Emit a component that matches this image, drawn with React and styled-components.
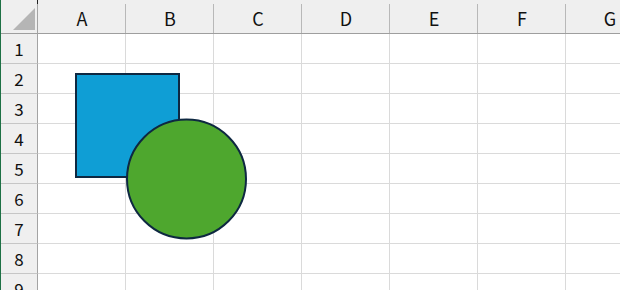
import styled, { createGlobalStyle } from "styled-components";

const GlobalStyle = createGlobalStyle`
  html, body {
    margin: 0;
    padding: 0;
    background: #ffffff;
    overflow: hidden;
  }
  body {
    font-family: "Noto Sans CJK JP", "Liberation Sans", sans-serif;
  }
`;

const COLS = ["A", "B", "C", "D", "E", "F", "G"];
const ROWS = [1, 2, 3, 4, 5, 6, 7, 8, 9];

const Sheet = styled.div`
  position: relative;
  width: 620px;
  height: 290px;
  overflow: hidden;
  border-left: 1px solid #1e7145;
  box-sizing: border-box;
`;

const Grid = styled.div`
  display: grid;
  grid-template-columns: 37px repeat(${COLS.length}, 88px);
  grid-template-rows: 34px repeat(${ROWS.length}, 30px);
`;

const Corner = styled.div`
  position: relative;
  background: #efefef;
  border-right: 1px solid #a3a3a3;
  border-bottom: 1px solid #9e9e9e;
  box-sizing: border-box;
  display: flex;
  align-items: flex-end;
  justify-content: flex-end;
  padding: 0 2px 3px 0;

  &::before {
    content: "";
    position: absolute;
    right: -1px;
    top: 0;
    width: 1px;
    height: 4px;
    background: #202020;
  }
`;

const ColHead = styled.div`
  position: relative;
  background: #efefef;
  border-bottom: 1px solid #9e9e9e;
  box-sizing: border-box;
  display: flex;
  align-items: center;
  justify-content: center;
  padding-top: 2px;
  font-size: 18px;
  color: #111111;

  &::after {
    content: "";
    position: absolute;
    right: 0;
    top: 4px;
    bottom: 0;
    width: 1px;
    background: #b8b8b8;
  }
`;

const RowHead = styled.div`
  background: #efefef;
  border-right: 1px solid #a3a3a3;
  border-bottom: 1px solid #c6c6c6;
  box-sizing: border-box;
  display: flex;
  align-items: center;
  justify-content: center;
  font-size: 17px;
  color: #111111;
`;

const Cell = styled.div`
  border-right: 1px solid #dadada;
  border-bottom: 1px solid #dadada;
  box-sizing: border-box;
  background: #ffffff;
`;

const Shapes = styled.svg`
  position: absolute;
  left: -1px;
  top: 0;
  pointer-events: none;
`;

export default function App() {
  return (
    <>
      <GlobalStyle />
      <Sheet>
        <Grid>
          <Corner>
            <svg width="22" height="22" viewBox="0 0 22 22">
              <polygon points="22,0 22,22 0,22" fill="#b5b5b5" />
            </svg>
          </Corner>
          {COLS.map((c) => (
            <ColHead key={c}>{c}</ColHead>
          ))}
          {ROWS.map((r) => [
            <RowHead key={"h" + r}>{r}</RowHead>,
            ...COLS.map((c) => <Cell key={c + r} />),
          ])}
        </Grid>
        <Shapes width="620" height="290">
          <rect x="76" y="74" width="103" height="103" fill="#0f9ed5" stroke="#0e2841" strokeWidth="2" />
          <circle cx="186.5" cy="179" r="59.5" fill="#4ea72e" stroke="#0e2841" strokeWidth="2" />
        </Shapes>
      </Sheet>
    </>
  );
}
